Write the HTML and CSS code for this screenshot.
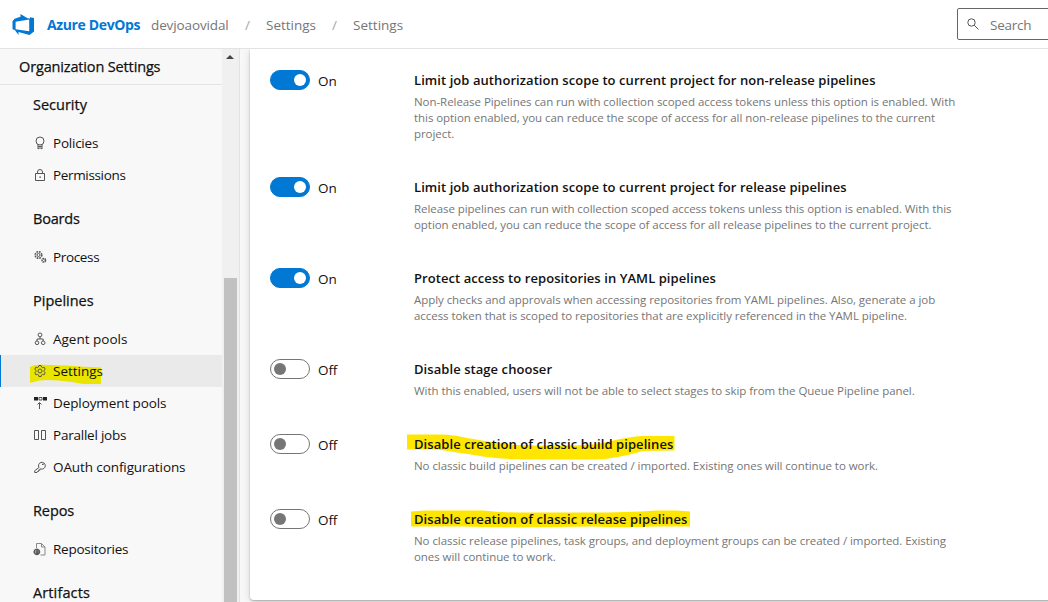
FILE: index.html
```html
<!DOCTYPE html>
<html lang="en">
<head>
<meta charset="utf-8">
<title>Settings - Azure DevOps</title>
<link rel="stylesheet" href="styles.css">
</head>
<body>
<header class="topbar">
  <svg class="logo" viewBox="0 0 22 22" width="22" height="22"><path fill="#0078d4" fill-rule="evenodd" d="M22 4v13.500L17.500 21 6.500 18v3L2.800 16 .5 15.200V7.200L2.600 4.700 8.500 2.700V0L15.500 4.200 18 4.500V3.300zM3.600 7.800v7.400L17.200 17.300V5.600z"/></svg>
  <span class="brand">Azure DevOps</span>
  <span class="crumb org">devjoaovidal</span>
  <span class="slash">/</span>
  <span class="crumb">Settings</span>
  <span class="slash">/</span>
  <span class="crumb">Settings</span>
  <div class="search">
    <svg viewBox="0 0 12 12" width="12" height="12"><circle cx="4.500" cy="4.500" r="3.700"/><path d="M7.200 7.200l4.300 4.300"/></svg>
    <span>Search</span>
  </div>
</header>
<div class="body">
  <nav class="sidebar">
    <h1>Organization Settings</h1>
    <h2 class="first">Security</h2>
    <a class="item tight"><svg viewBox="0 0 14 14"><circle cx="7" cy="5" r="4"/><path d="M5 8.500V13l2-1.300L9 13V8.500M5 10.500h4"/></svg>Policies</a>
    <a class="item tighter"><svg viewBox="0 0 14 14"><path d="M2.500 5.500h9v7h-9zM4.500 5.500V4a2.500 2.500 0 0 1 5 0v1.500"/><path class="solid" d="M6.500 8.500h1.200v1.200H6.500z"/></svg>Permissions</a>
    <h2 class="tighter">Boards</h2>
    <a class="item tighter"><svg viewBox="0 0 14 14"><circle cx="5.500" cy="5" r="3.300" stroke-width="1.600" stroke-dasharray="1.700 .9"/><circle cx="5.500" cy="5" r="1.500"/><circle cx="10.800" cy="10.300" r="1.700" stroke-width="1.600" stroke-dasharray="1.500 .5"/></svg>Process</a>
    <h2>Pipelines</h2>
    <a class="item"><svg viewBox="0 0 14 14"><circle cx="7" cy="2.900" r="1.900"/><circle cx="4" cy="10.800" r="1.800"/><circle cx="10.200" cy="10.800" r="1.800"/><path d="M7 5v2M4 9V7h6.200v2"/></svg>Agent pools</a>
    <a class="item selected">
      <svg class="marker" viewBox="0 0 72 20"><path d="M0 3Q4 .5 12 .8L36 1.600 58 3 71 3.600V20H53Q40 17 28 16.400 10 15 4 18L0 18.800z"/></svg>
      <svg viewBox="0 0 14 14"><path d="M5.900 1.500h2.200l.4 1.500 1 .6 1.600-.4 1.100 1.900-1.100 1.100v1.600l1.100 1.100-1.100 1.900-1.600-.4-1 .6-.4 1.500H5.900L5.500 11l-1-.6-1.600.4-1.100-1.900 1.100-1.100V6.200L1.800 5.100l1.100-1.900 1.600.4 1-.6z"/><circle cx="7" cy="7" r="2"/></svg>Settings</a>
    <a class="item snug"><svg viewBox="0 0 14 14"><path class="solid" d="M1 1h4v3.500H1zM10 1h4v3.500h-4z"/><path d="M6 1.500h3v2.500H6zM6.500 13V7M4.500 8.500l2-2 2 2"/></svg>Deployment pools</a>
    <a class="item tight"><svg viewBox="0 0 14 14"><path d="M1.500 2.500h4v9h-4zM8.500 2.500h4v9h-4z"/></svg>Parallel jobs</a>
    <a class="item snug"><svg viewBox="0 0 14 14"><path d="M6 7.500A3.400 3.400 0 1 1 8 9H6.800v1.300H5.500v1.200H4.300l-.3 1H1.700v-1.800z"/><path class="solid" d="M9.300 3.700h1.200v1.200H9.300z"/></svg>OAuth configurations</a>
    <h2 class="snug">Repos</h2>
    <a class="item tight"><svg viewBox="0 0 14 14"><path stroke="#888" d="M3.500 6V1.500h5l3.500 3.500v8H7.500M8.500 1.500V5H12"/><path stroke-width="1.500" d="M3.800 7.300a2.600 2.600 0 1 0 .1 0M2.500 10h3M4 8v4"/></svg>Repositories</a>
    <h2 class="wide">Artifacts</h2>
  </nav>
  <div class="scrollbar"><i class="arrow"></i><i class="thumb"></i></div>
  <main>
    <section class="card">
      <div class="row"><div class="toggle on"></div><span class="state">On</span>
        <div class="text"><h3>Limit job authorization scope to current project for non-release pipelines</h3>
        <p>Non-Release Pipelines can run with collection scoped access tokens unless this option is enabled. With<br>this option enabled, you can reduce the scope of access for all non-release pipelines to the current<br>project.</p></div></div>
      <div class="row"><div class="toggle on"></div><span class="state">On</span>
        <div class="text"><h3>Limit job authorization scope to current project for release pipelines</h3>
        <p>Release pipelines can run with collection scoped access tokens unless this option is enabled. With this<br>option enabled, you can reduce the scope of access for all release pipelines to the current project.</p></div></div>
      <div class="row"><div class="toggle on"></div><span class="state">On</span>
        <div class="text"><h3>Protect access to repositories in YAML pipelines</h3>
        <p>Apply checks and approvals when accessing repositories from YAML pipelines. Also, generate a job<br>access token that is scoped to repositories that are explicitly referenced in the YAML pipeline.</p></div></div>
      <div class="row"><div class="toggle"></div><span class="state">Off</span>
        <div class="text"><h3>Disable stage chooser</h3>
        <p>With this enabled, users will not be able to select stages to skip from the Queue Pipeline panel.</p></div></div>
      <div class="row"><div class="toggle"></div><span class="state">Off</span>
        <div class="text"><svg class="marker build" viewBox="0 0 268 26"><path d="M0 .5H34Q46 .5 60 4 82 8 104 10.500 120 12 150 11.500 184 12 200 8 220 3 234 2H267.500V16.500L236 17Q208 25 190 25.500H116Q90 25 73 22 48 18 30 15.500H0z"/></svg>
        <h3>Disable creation of classic build pipelines</h3>
        <p>No classic build pipelines can be created / imported. Existing ones will continue to work.</p></div></div>
      <div class="row"><div class="toggle"></div><span class="state">Off</span>
        <div class="text"><svg class="marker release" viewBox="0 0 280 18"><path d="M0 1.500 14 .5H72Q90 2.500 106 2.500H180Q215 2.500 245 .5H266L279 1.500V16.500H245Q215 18 180 16.500L106 17.500 50 16.500H0z"/></svg>
        <h3>Disable creation of classic release pipelines</h3>
        <p>No classic release pipelines, task groups, and deployment groups can be created / imported. Existing<br>ones will continue to work.</p></div></div>
    </section>
  </main>
</div>
</body>
</html>
```
FILE: styles.css
```css
* { box-sizing: border-box; }
body {
  margin: 0;
  width: 1048px;
  height: 602px;
  overflow: hidden;
  font: 13.5px "Open Sans", "Noto Sans", sans-serif;
  color: #111;
  background: #f8f8f8;
}
h1, h2, h3, p { margin: 0; }

.topbar {
  height: 49px;
  display: flex;
  align-items: center;
  padding: 1px 0 0 12px;
  background: #fff;
  border-bottom: 1px solid #e3e3e3;
  color: #767676;
  line-height: 20px;
}
.brand { width: 104px; margin-left: 13px; font-size: 14px; font-weight: 700; letter-spacing: -.37px; color: #0078d4; }
.org { letter-spacing: -.12px; width: 78px; }
.crumb { flex: none; }
.slash { width: 37px; padding-left: 16px; color: #a6a6a6; }
.search {
  width: 100px;
  height: 32px;
  flex: none;
  display: flex;
  align-items: center;
  gap: 11px;
  margin: -1px -9px 0 auto;
  padding-left: 9px;
  border: 1px solid #666;
  border-radius: 2px;
  letter-spacing: -.25px;
}
.search svg { fill: none; stroke: #555; margin-top: -1px; }
.search span { padding-top: 2px; }

.body { display: flex; height: 553px; }
.sidebar { width: 222px; flex: none; overflow: hidden; }
h1, h2 { font-size: 14.5px; font-weight: 500; line-height: 20px; -webkit-text-stroke: .25px #111; }
h1 { height: 36px; padding: 8px 0 0 19px; letter-spacing: -.15px; border-bottom: 1px solid #e3e3e3; }
h2 { height: 50px; padding: 18px 0 0 33px; }
h2.first { height: 42px; padding-top: 10px; }
.item {
  position: relative;
  z-index: 0;
  height: 32px;
  display: flex;
  align-items: center;
  gap: 6px;
  padding-left: 33px;
}
.item > svg:not(.marker) { width: 14px; height: 14px; fill: none; stroke: #555; }
.item .solid { fill: #222; stroke: none; }
.selected { background: #eaeaea; box-shadow: inset 1px 0 #0078d4; }
.snug { letter-spacing: -.1px; }
.tight { letter-spacing: -.23px; }
.tighter { letter-spacing: -.34px; }
h2.tighter { letter-spacing: -.2px; }
.wide { letter-spacing: .12px; }

.marker { position: absolute; z-index: -1; fill: #ffe600; }
.selected .marker { left: 30px; top: 9px; width: 72px; height: 20px; fill: #e9e500; }
.build { left: -7px; top: 0; width: 268px; height: 26px; }
.release { left: -3px; top: 1px; width: 280px; height: 18px; }

.scrollbar {
  width: 18px;
  flex: none;
  display: flex;
  flex-direction: column;
  background: #f0f0f0;
  border-right: 1px solid #e2e2e2;
}
.arrow { width: 8px; height: 4px; margin: 6px 0 219px 4px; background: #444; clip-path: polygon(50% 0, 100% 100%, 0 100%); }
.thumb { width: 13px; flex: 1; margin-left: 2px; background: #c1c1c1; }

main { flex: 1; padding-left: 10px; overflow: hidden; }
.card {
  height: 551px;
  width: 820px;
  padding: 21px 0 0 20px;
  background: #fff;
  border-radius: 0 0 0 4px;
  box-shadow: 0 1px 2px rgba(0,0,0,.25), 0 2px 8px rgba(0,0,0,.14);
}
.row { display: flex; align-items: flex-start; margin-bottom: 35px; }
.toggle { width: 40px; height: 20px; flex: none; padding: 3px; border: 1px solid #767676; border-radius: 10px; }
.toggle::after { content: ""; display: block; width: 12px; height: 12px; border-radius: 50%; background: #767676; }
.on { background: #0078d4; border-color: #0078d4; }
.on::after { background: #fff; margin-left: 20px; }
.state { width: 96px; margin-left: 8px; line-height: 22px; letter-spacing: -.1px; }
.text { position: relative; z-index: 0; white-space: nowrap; }
h3 { font-size: 13px; font-weight: 600; line-height: 20px; letter-spacing: .066px; }
p { margin-top: 4px; font-size: 11.5px; line-height: 16px; letter-spacing: -.057px; color: #767676; }
```
